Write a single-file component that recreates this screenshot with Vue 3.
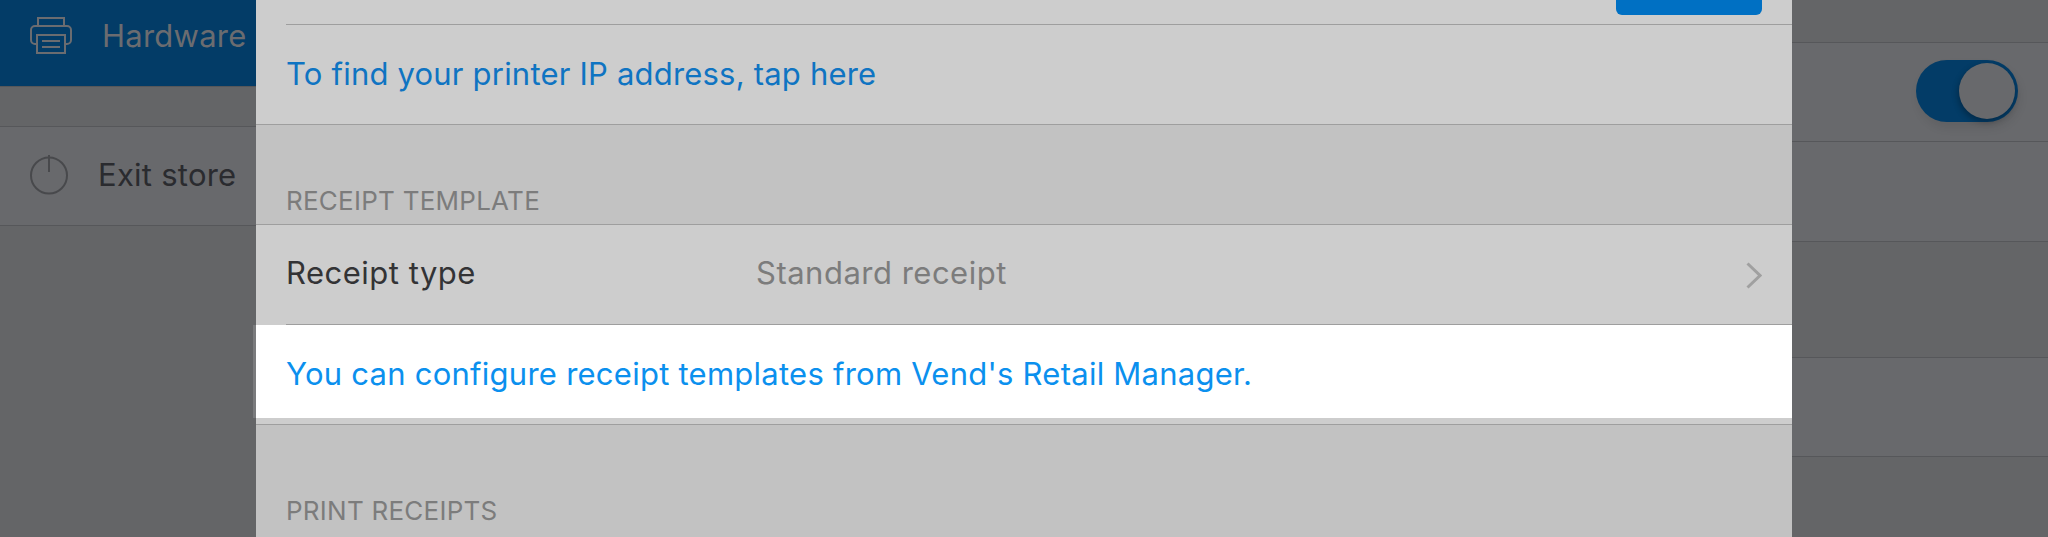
<script setup>
const labelWidth = 470
</script>

<template>
  <div class="screen">
    <aside class="sidebar">
      <div class="nav-item active">
        <svg class="printer" width="42" height="37" viewBox="0 0 42 37" fill="none" stroke="#6b6c70" stroke-width="2">
          <path d="M8 9V1h26v8" />
          <path d="M7 27H5a4 4 0 0 1-4-4V13a4 4 0 0 1 4-4h32a4 4 0 0 1 4 4v10a4 4 0 0 1-4 4h-2" />
          <rect x="7" y="18" width="28" height="18" />
          <path d="M12 24h18M12 30h18" />
        </svg>
        <span>Hardware</span>
      </div>
      <div class="nav-gap"></div>
      <div class="nav-item exit">
        <svg class="power" width="40" height="40" viewBox="0 0 40 40" fill="none" stroke="#48494c" stroke-width="2">
          <circle cx="20" cy="20.5" r="18" />
          <path d="M20 0v17" />
        </svg>
        <span>Exit store</span>
      </div>
    </aside>

    <main class="modal">
      <div class="top-row">
        <button class="save-btn"></button>
      </div>
      <div class="row link-row">
        <a class="link">To find your printer IP address, tap here</a>
      </div>
      <div class="section">
        <span>RECEIPT TEMPLATE</span>
      </div>
      <div class="row select-row">
        <span class="row-label" :style="{ width: labelWidth + 'px' }">Receipt type</span>
        <span class="row-value">Standard receipt</span>
        <svg class="chevron" width="16" height="27" viewBox="0 0 16 27" fill="none" stroke="#a0a0a0" stroke-width="3">
          <path d="M1.5 1.5L14 13.5 1.5 25.5" />
        </svg>
      </div>
      <div class="note">
        <a class="link bright">You can configure receipt templates from Vend's Retail Manager.</a>
      </div>
      <div class="note-after"></div>
      <div class="section last">
        <span>PRINT RECEIPTS</span>
      </div>
    </main>

    <aside class="settings">
      <div class="set-row top"></div>
      <div class="set-row toggle-row">
        <div class="toggle"><div class="knob"></div></div>
      </div>
      <div class="set-row middle"></div>
      <div class="set-row dark"></div>
      <div class="set-row"></div>
      <div class="set-row dark fill"></div>
    </aside>
  </div>
</template>

<style>
html, body {
  margin: 0;
  height: 537px;
  overflow: hidden;
  background: #646567;
}
</style>

<style scoped>
.screen {
  display: flex;
  width: 2048px;
  height: 537px;
  overflow: hidden;
  font-family: Inter, "Liberation Sans", sans-serif;
  letter-spacing: 0.25px;
}
.sidebar {
  width: 256px;
  flex: none;
  display: flex;
  flex-direction: column;
  background: #646567;
}
.nav-item {
  display: flex;
  align-items: center;
  font-size: 31px;
  box-sizing: border-box;
}
.active {
  height: 87px;
  padding: 0 0 16px 30px;
  background: #033c67;
  color: #6b6c70;
  border-bottom: 1px solid #56575a;
}
.printer {
  margin-right: 30px;
}
.nav-gap {
  height: 39px;
}
.exit {
  height: 100px;
  padding: 0 0 3px 29px;
  background: #68696c;
  color: #2a2b2f;
  border-top: 1px solid #56575a;
  border-bottom: 1px solid #56575a;
}
.power {
  margin-right: 29px;
}
.modal {
  width: 1536px;
  flex: none;
  display: flex;
  flex-direction: column;
  background: #cdcdcd;
  font-size: 31px;
}
.top-row {
  height: 24px;
  margin-left: 30px;
  padding-right: 30px;
  display: flex;
  justify-content: flex-end;
  align-items: flex-start;
  border-bottom: 1px solid #9e9e9e;
}
.save-btn {
  width: 146px;
  height: 15px;
  padding: 0;
  border: none;
  border-radius: 0 0 6px 6px;
  background: #0070c3;
}
.row {
  display: flex;
  align-items: center;
  padding-left: 30px;
  box-sizing: border-box;
}
.link-row {
  height: 100px;
  padding-bottom: 3px;
  border-bottom: 1px solid #9e9e9e;
  letter-spacing: 0.2px;
}
.link {
  color: #0f74c2;
}
.bright {
  color: #0b90ee;
}
.section {
  height: 100px;
  box-sizing: border-box;
  padding: 0 30px 8px;
  display: flex;
  align-items: flex-end;
  background: #c2c2c2;
  color: #7c7c7c;
  font-size: 26px;
  border-bottom: 1px solid #9e9e9e;
}
.section.last {
  flex: 1;
  border-bottom: none;
  align-items: flex-start;
  padding-top: 70px;
  border-top: 1px solid #9e9e9e;
}
.select-row {
  height: 100px;
  position: relative;
  padding-bottom: 5px;
  padding-right: 30px;
  letter-spacing: 0.5px;
}
.select-row::after {
  content: "";
  position: absolute;
  left: 30px;
  right: 0;
  bottom: 0;
  height: 1px;
  background: #9e9e9e;
}
.row-label {
  color: #333335;
}
.row-value {
  flex: 1;
  color: #7c7c7c;
}
.chevron {
  margin-top: 5px;
}
.note {
  height: 93px;
  display: flex;
  align-items: center;
  padding: 3px 0 0 30px;
  box-sizing: border-box;
  background: #fff;
  box-shadow: -3px 0 0 #7a7b7d;
  position: relative;
}
.note-after {
  height: 6px;
}
.settings {
  flex: 1;
  display: flex;
  flex-direction: column;
  background: #68696c;
}
.set-row {
  height: 99px;
  box-sizing: border-box;
  border-bottom: 1px solid #56575a;
  flex: none;
}
.set-row.middle {
  height: 100px;
}
.set-row.top {
  height: 43px;
  background: #646567;
}
.set-row.dark {
  height: 116px;
  background: #646567;
}
.set-row.fill {
  flex: 1;
  border-bottom: none;
}
.toggle-row {
  display: flex;
  align-items: center;
  justify-content: flex-end;
  padding: 0 30px 2px 0;
}
.toggle {
  width: 102px;
  height: 62px;
  border-radius: 31px;
  background: #033c67;
  position: relative;
  box-shadow: 2px 6px 10px rgba(0, 0, 0, 0.08);
}
.knob {
  position: absolute;
  right: 3px;
  top: 3px;
  width: 56px;
  height: 56px;
  border-radius: 50%;
  background: #68696c;
  box-shadow: -1px 3px 6px rgba(0, 0, 0, 0.3);
}
</style>
